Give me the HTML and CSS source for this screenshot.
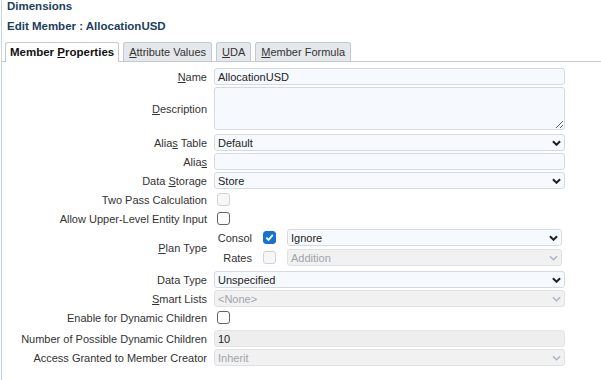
FILE: index.html
```html
<!DOCTYPE html>
<html lang="en">
<head>
    <meta charset="UTF-8">
    <title>Dimensions - Edit Member</title>
    <link rel="stylesheet" href="styles.css">
</head>
<body>
    <div class="page">
        <h1 class="title">Dimensions</h1>
        <h2 class="subtitle">Edit Member : AllocationUSD</h2>

        <div class="tabs">
            <div class="tab active">Member <u>P</u>roperties</div>
            <div class="tab"><u>A</u>ttribute Values</div>
            <div class="tab"><u>U</u>DA</div>
            <div class="tab"><u>M</u>ember Formula</div>
        </div>

        <div class="form">
            <div class="row">
                <div class="lbl"><u>N</u>ame</div>
                <div class="ctl field">AllocationUSD</div>
            </div>
            <div class="row desc">
                <div class="lbl"><u>D</u>escription</div>
                <textarea class="ctl area"></textarea>
            </div>
            <div class="row">
                <div class="lbl">Alia<u>s</u> Table</div>
                <div class="ctl field select">
                    <span>Default</span>
                    <svg class="chev" viewBox="0 0 10 6"><path d="M1 1 L5 5 L9 1"/></svg>
                </div>
            </div>
            <div class="row">
                <div class="lbl">Alia<u>s</u></div>
                <div class="ctl field"></div>
            </div>
            <div class="row">
                <div class="lbl">Data <u>S</u>torage</div>
                <div class="ctl field select">
                    <span>Store</span>
                    <svg class="chev" viewBox="0 0 10 6"><path d="M1 1 L5 5 L9 1"/></svg>
                </div>
            </div>
            <div class="row">
                <div class="lbl">Two Pass Calculation</div>
                <div class="ctl"><div class="check disabled"></div></div>
            </div>
            <div class="row">
                <div class="lbl">Allow Upper-Level Entity Input</div>
                <div class="ctl"><div class="check"></div></div>
            </div>
            <div class="row plan">
                <div class="lbl"><u>P</u>lan Type</div>
                <div class="ctl plan-grid">
                    <div class="sub">Consol</div>
                    <div class="check on">
                        <svg viewBox="0 0 12 12"><path d="M2.5 6.2 L5 8.6 L9.6 3.2"/></svg>
                    </div>
                    <div class="field select">
                        <span>Ignore</span>
                        <svg class="chev" viewBox="0 0 10 6"><path d="M1 1 L5 5 L9 1"/></svg>
                    </div>
                    <div class="sub">Rates</div>
                    <div class="check disabled"></div>
                    <div class="field select off">
                        <span>Addition</span>
                        <svg class="chev" viewBox="0 0 10 6"><path d="M1 1 L5 5 L9 1"/></svg>
                    </div>
                </div>
            </div>
            <div class="row">
                <div class="lbl">Data Type</div>
                <div class="ctl field select">
                    <span>Unspecified</span>
                    <svg class="chev" viewBox="0 0 10 6"><path d="M1 1 L5 5 L9 1"/></svg>
                </div>
            </div>
            <div class="row">
                <div class="lbl"><u>S</u>mart Lists</div>
                <div class="ctl field select off">
                    <span>&lt;None&gt;</span>
                    <svg class="chev" viewBox="0 0 10 6"><path d="M1 1 L5 5 L9 1"/></svg>
                </div>
            </div>
            <div class="row dyn">
                <div class="lbl">Enable for Dynamic Children</div>
                <div class="ctl"><div class="check"></div></div>
            </div>
            <div class="row">
                <div class="lbl">Number of Possible Dynamic Children</div>
                <div class="ctl field readonly">10</div>
            </div>
            <div class="row">
                <div class="lbl">Access Granted to Member Creator</div>
                <div class="ctl field select off">
                    <span>Inherit</span>
                    <svg class="chev" viewBox="0 0 10 6"><path d="M1 1 L5 5 L9 1"/></svg>
                </div>
            </div>
        </div>
    </div>
</body>
</html>
```

FILE: styles.css
```css
* {
    margin: 0;
    padding: 0;
    box-sizing: border-box;
}

body {
    font-family: 'Liberation Sans', Arial, sans-serif;
    font-size: 11px;
    color: #333;
    background: #fff;
}

.page {
    margin-left: 1px;
    border-left: 1px solid #c9d6e2;
    min-height: 380px;
}

.title,
.subtitle {
    font-size: 11.5px;
    font-weight: bold;
    color: #1c3d5e;
    padding-left: 5px;
}

.title {
    line-height: 13px;
}

.subtitle {
    line-height: 14px;
    margin-top: 6px;
}

/* tab strip */
.tabs {
    display: flex;
    align-items: flex-end;
    gap: 4px;
    height: 20px;
    margin-top: 9px;
    padding-left: 3px;
    border-bottom: 1px solid #c4c9ce;
}

.tab {
    height: 19px;
    line-height: 18px;
    padding: 0 5px;
    border: 1px solid #c4c9ce;
    border-bottom: none;
    border-radius: 3px 3px 0 0;
    background: #e4e7eb;
    color: #333;
}

.tab.active {
    height: 20px;
    margin-bottom: -1px;
    background: #fff;
    font-weight: bold;
    font-size: 11.5px;
    color: #111;
    padding: 0 4px;
}

/* form rows */
.form {
    margin-top: 6px;
}

.row {
    display: flex;
    align-items: center;
    column-gap: 7px;
    min-height: 17px;
    margin-bottom: 2px;
}

.row.desc {
    margin-bottom: 4px;
}

.row.plan {
    margin-top: 1px;
    margin-bottom: 5px;
}

.row.dyn {
    margin-bottom: 4px;
}

.lbl {
    width: 205px;
    flex-shrink: 0;
    text-align: right;
    color: #333;
}

.ctl {
    width: 351px;
}

.field {
    display: flex;
    align-items: center;
    height: 17px;
    padding: 0 3px;
    border: 1px solid #d5dae0;
    border-radius: 3px;
    background: #f6faff;
    color: #222;
}

.area {
    display: block;
    height: 43px;
    border: 1px solid #d5dae0;
    border-radius: 3px;
    background: #f6faff;
    resize: vertical;
    font-family: inherit;
    font-size: 11px;
    outline: none;
}

.select {
    justify-content: space-between;
}

.chev {
    width: 9px;
    height: 6px;
    fill: none;
    stroke: #222;
    stroke-width: 2.2;
}

.field.off {
    background: #f1f1f2;
    border-color: #dfe1e4;
    color: #a0a4aa;
}

.field.off .chev {
    stroke: #aab3c5;
    stroke-width: 1.6;
}

.field.readonly {
    background: #eeeeef;
    border-color: #e4e5e7;
    color: #222;
}

/* checkboxes */
.check {
    width: 13px;
    height: 13px;
    margin-left: 3px;
    border: 1px solid #606468;
    border-radius: 3px;
    background: #fff;
}

.check.disabled {
    border-color: #cfd3d7;
    background: #f7f7f7;
}

.check.on {
    margin-left: 0;
    border-color: #1572d3;
    background: #1572d3;
    display: flex;
    align-items: center;
    justify-content: center;
}

.check.on svg {
    width: 11px;
    height: 11px;
    fill: none;
    stroke: #fff;
    stroke-width: 2;
}

/* plan type block */
.plan-grid {
    display: grid;
    grid-template-columns: 38px 13px 1fr;
    column-gap: 11px;
    row-gap: 3px;
    align-items: center;
    padding-right: 3px;
}

.plan-grid .sub {
    text-align: right;
}

.plan-grid .check {
    margin-left: 0;
}
```
